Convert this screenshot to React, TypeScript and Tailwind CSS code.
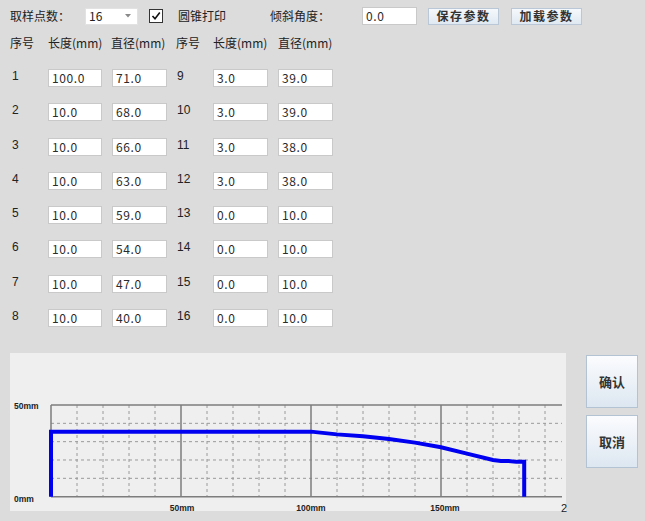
import React from "react";

const left = [
  { n: "1", len: "100.0", dia: "71.0" },
  { n: "2", len: "10.0", dia: "68.0" },
  { n: "3", len: "10.0", dia: "66.0" },
  { n: "4", len: "10.0", dia: "63.0" },
  { n: "5", len: "10.0", dia: "59.0" },
  { n: "6", len: "10.0", dia: "54.0" },
  { n: "7", len: "10.0", dia: "47.0" },
  { n: "8", len: "10.0", dia: "40.0" },
];
const right = [
  { n: "9", len: "3.0", dia: "39.0" },
  { n: "10", len: "3.0", dia: "39.0" },
  { n: "11", len: "3.0", dia: "38.0" },
  { n: "12", len: "3.0", dia: "38.0" },
  { n: "13", len: "0.0", dia: "10.0" },
  { n: "14", len: "0.0", dia: "10.0" },
  { n: "15", len: "0.0", dia: "10.0" },
  { n: "16", len: "0.0", dia: "10.0" },
];

const FONT = { fontFamily: '"Noto Sans CJK SC", "Noto Sans", sans-serif' };

function Box({ v, w }: { v: string; w: string }) {
  return (
    <div
      className={`${w} h-[18px] bg-white border border-[#c9c9c9] px-[3px] text-[12px] leading-[16px] text-[#2a2a2a] tracking-[0.6px]`}
    >
      {v}
    </div>
  );
}

function Btn({ label }: { label: string }) {
  return (
    <div className="w-[71px] h-[17px] flex items-center justify-center border border-[#b9c7d6] bg-gradient-to-b from-[#f6f9fc] to-[#dfe8f1] text-[12px] font-semibold tracking-[1.5px] text-[#333] leading-none">
      {label}
    </div>
  );
}

function BigBtn({ label }: { label: string }) {
  return (
    <div className="w-[52px] h-[53px] flex items-center justify-center border border-[#b3c3d4] bg-gradient-to-b from-[#fbfcfe] to-[#dde7f1] text-[13px] font-bold text-[#333]">
      {label}
    </div>
  );
}

function Chart() {
  const x0 = 41;
  const xs = 2.6;
  const yb = 143.7;
  const ys = 1.833;
  const ytop = 52;
  const xr = 552;
  const minorV: number[] = [];
  for (let i = 1; i < 20; i++) {
    if (i % 5 !== 0) minorV.push(x0 + i * 26);
  }
  const majorV = [x0, x0 + 130, x0 + 260, x0 + 390];
  const minorH = [1, 2, 3, 4].map((k) => ytop + k * 18.33);
  const data = [...left, ...right];
  const pts: [number, number][] = [[0, 0]];
  let acc = 0;
  data.forEach((d, i) => {
    const L = parseFloat(d.len);
    const D = parseFloat(d.dia);
    if (i === 0) {
      pts.push([0, D / 2]);
      acc += L;
      pts.push([acc, D / 2]);
    } else if (L > 0) {
      acc += L;
      pts.push([acc, D / 2]);
    }
  });
  pts.push([acc, 0]);
  const poly = pts.map(([mm, r]) => `${x0 + mm * xs},${yb - r * ys}`).join(" ");
  return (
    <svg className="absolute inset-0 overflow-visible" width="556" height="158">
      {minorV.map((x) => (
        <line key={"v" + x} x1={x} y1={ytop} x2={x} y2={yb} stroke="#9a9a9a" strokeWidth="1" strokeDasharray="3 3" />
      ))}
      {minorH.map((y) => (
        <line key={"h" + y} x1={x0} y1={y} x2={xr} y2={y} stroke="#9a9a9a" strokeWidth="1" strokeDasharray="3 3" />
      ))}
      {majorV.map((x) => (
        <line key={"m" + x} x1={x} y1={ytop} x2={x} y2={yb} stroke="#7d7d7d" strokeWidth="1.5" />
      ))}
      <line x1={x0} y1={ytop} x2={xr} y2={ytop} stroke="#7d7d7d" strokeWidth="1.5" />
      <line x1={x0} y1={yb} x2={xr} y2={yb} stroke="#7d7d7d" strokeWidth="1.5" />
      <polyline points={poly} fill="none" stroke="#0000f0" strokeWidth="4" strokeLinejoin="miter" />
      <g fontFamily='"Liberation Sans", Arial, sans-serif' fontSize="8.5" fill="#222" fontWeight="bold">
        <text x="4" y="56">50mm</text>
        <text x="4" y="149">0mm</text>
        <text x="172" y="158" textAnchor="middle">50mm</text>
        <text x="301" y="158" textAnchor="middle">100mm</text>
        <text x="435" y="158" textAnchor="middle">150mm</text>
      </g>
      <text x="551" y="159" fontFamily='"Liberation Sans", Arial, sans-serif' fontSize="11" fill="#222">2</text>
    </svg>
  );
}

export default function App() {
  return (
    <div className="w-[645px] h-[521px] bg-[#dcdcdc] overflow-hidden text-[#222]" style={FONT}>
      <div className="h-[353px]">
        {/* top bar */}
        <div className="pt-[7px] pl-[10px] flex items-center h-[25px] text-[12px]">
          <span className="w-[75px]">取样点数：</span>
          <div className="w-[53px] h-[17px] bg-white border border-[#e2e2e2] flex items-center justify-between pl-[3px] pr-[6px]">
            <span className="text-[12px] leading-none">16</span>
            <svg width="6" height="4" viewBox="0 0 6 4">
              <path d="M0 0 L6 0 L3 3.5 Z" fill="#8a8a8a" />
            </svg>
          </div>
          <div className="ml-[11px] w-[14px] h-[14px] bg-white border border-[#333] flex items-center justify-center">
            <svg width="10" height="10" viewBox="0 0 10 10">
              <path d="M1.5 5 L4 7.8 L8.8 1.6" fill="none" stroke="#111" strokeWidth="1.6" />
            </svg>
          </div>
          <span className="ml-[15px] w-[92px]">圆锥打印</span>
          <span className="w-[92px]">倾斜角度：</span>
          <Box v="0.0" w="w-[55px]" />
          <div className="ml-[11px]">
            <Btn label="保存参数" />
          </div>
          <div className="ml-[12px]">
            <Btn label="加载参数" />
          </div>
        </div>
        {/* header */}
        <div className="mt-[10px] pl-[10px] flex h-[16px] text-[12px] leading-[16px]">
          <span className="w-[38px]">序号</span>
          <span className="w-[63px]">长度(mm)</span>
          <span className="w-[65px]">直径(mm)</span>
          <span className="w-[37px]">序号</span>
          <span className="w-[65px]">长度(mm)</span>
          <span>直径(mm)</span>
        </div>
        {/* rows */}
        <div className="mt-[18px] pl-[10px] flex flex-col gap-[16.3px]">
          {left.map((l, i) => {
            const r = right[i];
            return (
              <div key={l.n} className="flex items-start h-[18px]">
                <span className="w-[38px] pl-[2px] text-[12px] leading-[14px]" style={{ fontFamily: '"Liberation Sans", Arial, sans-serif' }}>
                  {l.n}
                </span>
                <Box v={l.len} w="w-[54px]" />
                <div className="w-[10px]" />
                <Box v={l.dia} w="w-[55px]" />
                <span className="ml-[9px] w-[37px] pl-[1px] text-[12px] leading-[14px]" style={{ fontFamily: '"Liberation Sans", Arial, sans-serif' }}>
                  {r.n}
                </span>
                <Box v={r.len} w="w-[55px]" />
                <div className="w-[10px]" />
                <Box v={r.dia} w="w-[55px]" />
              </div>
            );
          })}
        </div>
      </div>
      {/* bottom */}
      <div className="pl-[10px] flex">
        <div className="relative w-[556px] h-[158px] bg-[#efefef]">
          <Chart />
        </div>
        <div className="ml-[20px] mt-[2px] flex flex-col gap-[7px]">
          <BigBtn label="确认" />
          <BigBtn label="取消" />
        </div>
      </div>
    </div>
  );
}
